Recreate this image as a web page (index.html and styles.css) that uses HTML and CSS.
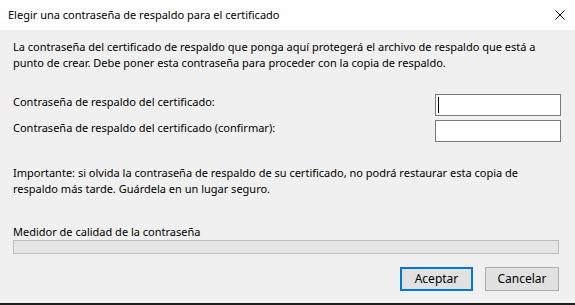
FILE: index.html
```html
<!DOCTYPE html>
<html lang="es">
<head>
<meta charset="utf-8">
<title>Elegir una contraseña de respaldo para el certificado</title>
<link rel="stylesheet" href="styles.css">
</head>
<body>
<div class="dialog">
  <div class="titlebar">
    <span class="title">Elegir una contraseña de respaldo para el certificado</span>
    <svg class="close" width="10" height="10" viewBox="0 0 10 10"><path d="M0.5 0.5 L9.5 9.5 M9.5 0.5 L0.5 9.5" stroke="#000" stroke-width="1" fill="none"/></svg>
  </div>
  <div class="content">
    <p class="intro">La contraseña del certificado de respaldo que ponga aquí protegerá el archivo de respaldo que está a punto de crear. Debe poner esta contraseña para proceder con la copia de respaldo.</p>
    <div class="form">
      <label class="label">Contraseña de respaldo del certificado:</label>
      <div class="field focused"><span class="caret"></span></div>
      <label class="label">Contraseña de respaldo del certificado (confirmar):</label>
      <div class="field"></div>
    </div>
    <p class="warning">Importante: si olvida la contraseña de respaldo de su certificado, no podrá restaurar esta copia de respaldo más tarde. Guárdela en un lugar seguro.</p>
    <div class="meter-label">Medidor de calidad de la contraseña</div>
    <div class="meter"></div>
    <div class="buttons">
      <button class="btn primary">Aceptar</button>
      <button class="btn">Cancelar</button>
    </div>
  </div>
</div>
</body>
</html>
```
FILE: styles.css
```css
* { box-sizing: border-box; }
html, body { margin: 0; padding: 0; }
body {
  width: 575px;
  height: 305px;
  font-family: "Noto Sans", "Open Sans", sans-serif;
  font-size: 11px;
  color: #000;
  background: #f0f0f0;
  overflow: hidden;
}
.dialog {
  height: 305px;
  display: flex;
  flex-direction: column;
  border-bottom: 2px solid #1f1f1f;
}
.titlebar {
  height: 30px;
  background: #fff;
  display: flex;
  align-items: center;
  justify-content: space-between;
  padding: 0 10px 0 8px;
}
.title { line-height: 16px; }
.close { display: block; margin-top: -1px; }
.content {
  flex: 1;
  padding: 9px 16px 0 13px;
}
p { margin: 0; }
.intro { line-height: 16px; }
.form {
  margin-top: 23px;
  display: grid;
  grid-template-columns: 1fr 126px;
  row-gap: 4px;
  margin-right: -2px;
}
.label { line-height: 16px; align-self: start; }
.field {
  height: 22px;
  background: #fff;
  border: 1px solid #7a7a7a;
  position: relative;
}
.caret {
  position: absolute;
  left: 2px;
  top: 2px;
  width: 1px;
  height: 16px;
  background: #000;
}
.warning {
  margin-top: 23px;
  line-height: 16px;
}
.meter-label {
  margin-top: 27px;
  line-height: 16px;
}
.meter {
  height: 14px;
  background: #e6e6e6;
  border: 1px solid #bcbcbc;
}
.buttons {
  margin-top: 13px;
  display: flex;
  justify-content: flex-end;
  gap: 12px;
}
.btn {
  font: inherit;
  font-size: 12px;
  color: #000;
  width: 74px;
  height: 24px;
  background: #e1e1e1;
  border: 1px solid #adadad;
  padding: 0;
  line-height: 20px;
}
.btn.primary {
  border: 2px solid #0078d7;
  width: 73px;
}
```
